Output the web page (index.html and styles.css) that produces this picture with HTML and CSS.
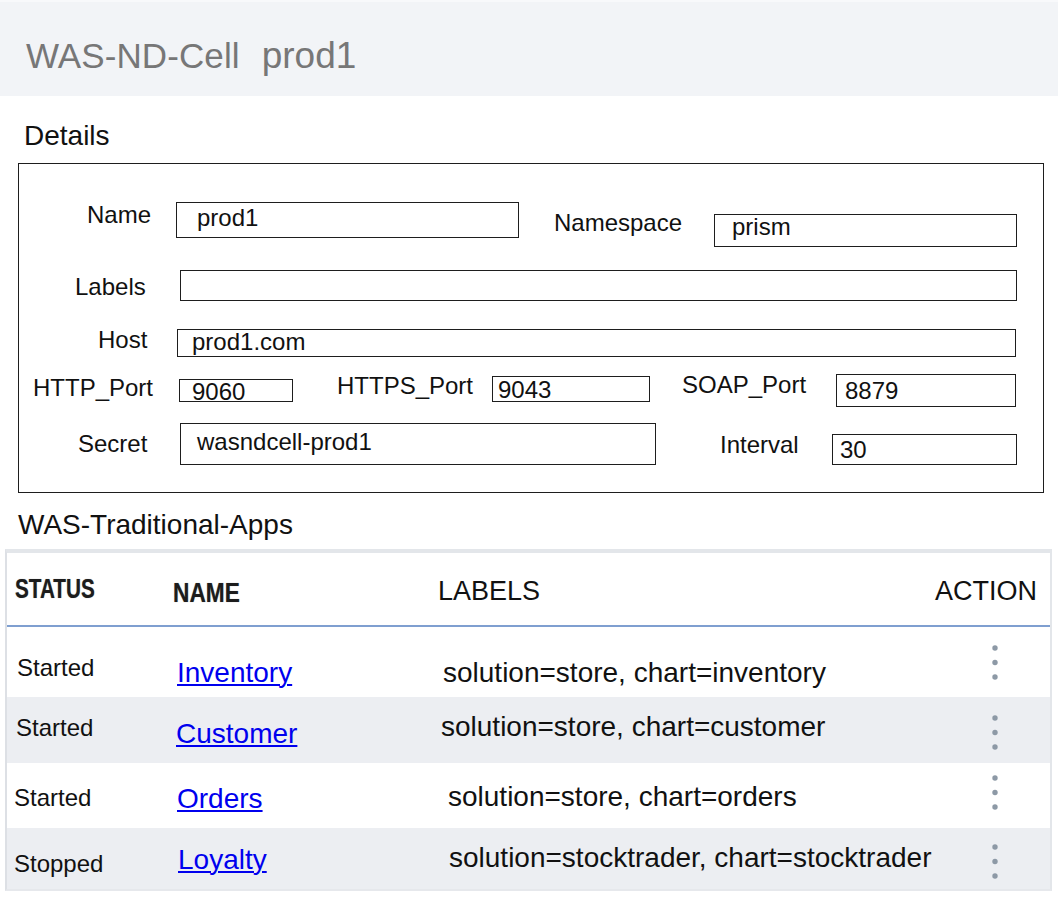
FILE: index.html
```html
<!DOCTYPE html>
<html lang="en">
<head>
<meta charset="utf-8">
<title>WAS-ND-Cell prod1</title>
<link rel="stylesheet" href="styles.css">
</head>
<body>
<header class="page-head">
  <span class="kind">WAS-ND-Cell</span>
  <span class="title">prod1</span>
</header>

<h2 class="section-title details-title">Details</h2>
<section class="details">
  <div class="frow row-a">
    <span class="lbl l-name">Name</span>
    <div class="field f-name">prod1</div>
    <span class="lbl l-ns">Namespace</span>
    <div class="field f-ns">prism</div>
  </div>
  <div class="frow row-b">
    <span class="lbl l-labels">Labels</span>
    <div class="field f-labels"></div>
  </div>
  <div class="frow row-c">
    <span class="lbl l-host">Host</span>
    <div class="field f-host">prod1.com</div>
  </div>
  <div class="frow row-d">
    <span class="lbl l-http">HTTP_Port</span>
    <div class="field f-http">9060</div>
    <span class="lbl l-https">HTTPS_Port</span>
    <div class="field f-https">9043</div>
    <span class="lbl l-soap">SOAP_Port</span>
    <div class="field f-soap">8879</div>
  </div>
  <div class="frow row-e">
    <span class="lbl l-secret">Secret</span>
    <div class="field f-secret">wasndcell-prod1</div>
    <span class="lbl l-int">Interval</span>
    <div class="field f-int">30</div>
  </div>
</section>

<h2 class="section-title apps-title">WAS-Traditional-Apps</h2>
<section class="apps">
  <div class="trow thead">
    <div class="th h-status"><span class="cond cond-status">STATUS</span></div>
    <div class="th h-name"><span class="cond cond-name">NAME</span></div>
    <div class="th h-labels">LABELS</div>
    <div class="th h-action">ACTION</div>
  </div>

  <div class="trow r1">
    <div class="c-status">Started</div>
    <div class="c-name"><a href="#">Inventory</a></div>
    <div class="c-labels">solution=store, chart=inventory</div>
    <div class="c-action"><svg class="kebab" width="6" height="35" viewBox="0 0 6 35"><circle cx="3" cy="3" r="2.7"/><circle cx="3" cy="17.5" r="2.7"/><circle cx="3" cy="32" r="2.7"/></svg></div>
  </div>

  <div class="trow r2 alt">
    <div class="c-status">Started</div>
    <div class="c-name"><a href="#">Customer</a></div>
    <div class="c-labels">solution=store, chart=customer</div>
    <div class="c-action"><svg class="kebab" width="6" height="35" viewBox="0 0 6 35"><circle cx="3" cy="3" r="2.7"/><circle cx="3" cy="17.5" r="2.7"/><circle cx="3" cy="32" r="2.7"/></svg></div>
  </div>

  <div class="trow r3">
    <div class="c-status">Started</div>
    <div class="c-name"><a href="#">Orders</a></div>
    <div class="c-labels">solution=store, chart=orders</div>
    <div class="c-action"><svg class="kebab" width="6" height="35" viewBox="0 0 6 35"><circle cx="3" cy="3" r="2.7"/><circle cx="3" cy="17.5" r="2.7"/><circle cx="3" cy="32" r="2.7"/></svg></div>
  </div>

  <div class="trow r4 alt">
    <div class="c-status">Stopped</div>
    <div class="c-name"><a href="#">Loyalty</a></div>
    <div class="c-labels">solution=stocktrader, chart=stocktrader</div>
    <div class="c-action"><svg class="kebab" width="6" height="35" viewBox="0 0 6 35"><circle cx="3" cy="3" r="2.7"/><circle cx="3" cy="17.5" r="2.7"/><circle cx="3" cy="32" r="2.7"/></svg></div>
  </div>
</section>
</body>
</html>
```

FILE: styles.css
```css
html, body {
  margin: 0;
  padding: 0;
  background: #ffffff;
}

body {
  font-family: "Liberation Sans", Arial, Helvetica, sans-serif;
  color: #111111;
  width: 1058px;
}

/* ---------- page header ---------- */
.page-head {
  height: 96px;
  box-sizing: border-box;
  background: #f2f4f7;
  border-top: 2px solid #f8f9fb;
  padding: 34px 0 0 26px;
  display: flex;
  align-items: baseline;
  gap: 22px;
  color: #777777;
}

.page-head .kind {
  font-size: 35px;
  line-height: 40px;
  letter-spacing: 0.1px;
}

.page-head .title {
  font-size: 37px;
  line-height: 40px;
}

/* ---------- section titles ---------- */
.section-title {
  margin: 0;
  font-weight: normal;
  color: #111111;
}

.details-title {
  font-size: 28px;
  line-height: 30px;
  margin: 25px 0 0 24px;
}

.apps-title {
  font-size: 28px;
  line-height: 30px;
  margin: 17px 0 0 18px;
}

/* ---------- details form ---------- */
.details {
  margin: 12px 0 0 18px;
  width: 1026px;
  box-sizing: border-box;
  border: 1px solid #1e1e1e;
  padding: 36px 0 27px 0;
}

.frow {
  display: flex;
  align-items: flex-start;
}

.row-b { margin-top: 23px; }
.row-c { margin-top: 26px; }
.row-d { margin-top: 15px; }
.row-e { margin-top: 16px; }

.lbl {
  display: block;
  flex: none;
  font-size: 24px;
  line-height: 24px;
  white-space: nowrap;
  color: #111111;
}

.field {
  flex: none;
  box-sizing: border-box;
  border: 1px solid #1e1e1e;
  font-size: 24px;
  line-height: 24px;
  white-space: nowrap;
  color: #111111;
}

/* row A */
.l-name { margin: 3px 0 0 68px; width: 89px; }
.f-name { margin-top: 2px; width: 343px; height: 36px; padding: 3px 0 0 20px; }
.l-ns { margin: 11px 0 0 35px; width: 160px; }
.f-ns { margin-top: 14px; width: 303px; height: 33px; padding: 0 0 0 17px; }

/* row B */
.l-labels { margin: 5px 0 0 56px; width: 105px; }
.f-labels { width: 837px; height: 31px; }

/* row C */
.l-host { margin: 1px 0 0 79px; width: 79px; }
.f-host { margin-top: 2px; width: 839px; height: 28px; padding: 0 0 0 14px; }

/* row D */
.l-http { margin: 4px 0 0 14px; width: 146px; }
.f-http { margin-top: 7px; width: 114px; height: 23px; padding: 0 0 0 12px; }
.l-https { margin: 2px 0 0 44px; width: 155px; }
.f-https { margin-top: 4px; width: 158px; height: 26px; padding: 1px 0 0 5px; }
.l-soap { margin: 1px 0 0 32px; width: 154px; }
.f-soap { margin-top: 2px; width: 180px; height: 33px; padding: 4px 0 0 8px; }

/* row E */
.l-secret { margin: 9px 0 0 59px; width: 102px; }
.f-secret { width: 476px; height: 42px; padding: 6px 0 0 16px; }
.l-int { margin: 10px 0 0 64px; width: 112px; }
.f-int { margin-top: 11px; width: 185px; height: 31px; padding: 3px 0 0 7px; }

/* ---------- apps table ---------- */
.apps {
  margin: 9px 0 0 5px;
  width: 1047px;
  box-sizing: border-box;
  border-top: 4px solid #e3e6ea;
  border-left: 2px solid #dde0e5;
  border-right: 2px solid #e3e6ea;
  border-bottom: 2px solid #e6e8ec;
}

.trow {
  display: grid;
  grid-template-columns: 163px 260px 495px 1fr;
  white-space: nowrap;
}

.thead {
  height: 74px;
  box-sizing: border-box;
  border-bottom: 2px solid #7f9fd0;
  background: #ffffff;
}

.th {
  font-size: 27px;
  line-height: 30px;
  color: #111111;
}

.cond {
  display: inline-block;
  font-size: 28px;
  font-weight: bold;
  color: #1c1c1c;
  transform-origin: left center;
  text-shadow: 0 0 1px rgba(0, 0, 0, 0.45);
}

.cond-status { transform: scaleX(0.74); }
.cond-name { transform: scaleX(0.81); }

.h-status { padding: 21px 0 0 8px; }
.h-name { padding: 25px 0 0 3px; }
.h-labels { padding: 23px 0 0 8px; }
.h-action { padding: 23px 13px 0 0; text-align: right; }

.r1 { height: 70px; }
.r2 { height: 66px; }
.r3 { height: 65px; }
.r4 { height: 61px; }

.alt { background: #eceef2; }

.c-status {
  font-size: 24px;
  line-height: 26px;
  color: #111111;
}

.c-name,
.c-labels {
  font-size: 28px;
  line-height: 30px;
  color: #111111;
}

.c-name a {
  color: #0000ee;
  text-decoration: underline;
  text-decoration-thickness: 2px;
  text-underline-offset: 2px;
}

.c-action {
  padding-left: 67px;
}

.kebab {
  display: block;
  fill: #8d99a6;
}

.r1 .c-status { padding: 28px 0 0 10px; }
.r1 .c-name { padding: 31px 0 0 7px; }
.r1 .c-labels { padding: 31px 0 0 13px; }
.r1 .c-action { padding-top: 18px; }

.r2 .c-status { padding: 18px 0 0 9px; }
.r2 .c-name { padding: 22px 0 0 6px; }
.r2 .c-labels { padding: 15px 0 0 11px; }
.r2 .c-action { padding-top: 18px; }

.r3 .c-status { padding: 22px 0 0 7px; }
.r3 .c-name { padding: 21px 0 0 7px; }
.r3 .c-labels { padding: 19px 0 0 18px; }
.r3 .c-action { padding-top: 12px; }

.r4 .c-status { padding: 23px 0 0 7px; }
.r4 .c-name { padding: 17px 0 0 8px; }
.r4 .c-labels { padding: 15px 0 0 19px; }
.r4 .c-action { padding-top: 16px; }
```
